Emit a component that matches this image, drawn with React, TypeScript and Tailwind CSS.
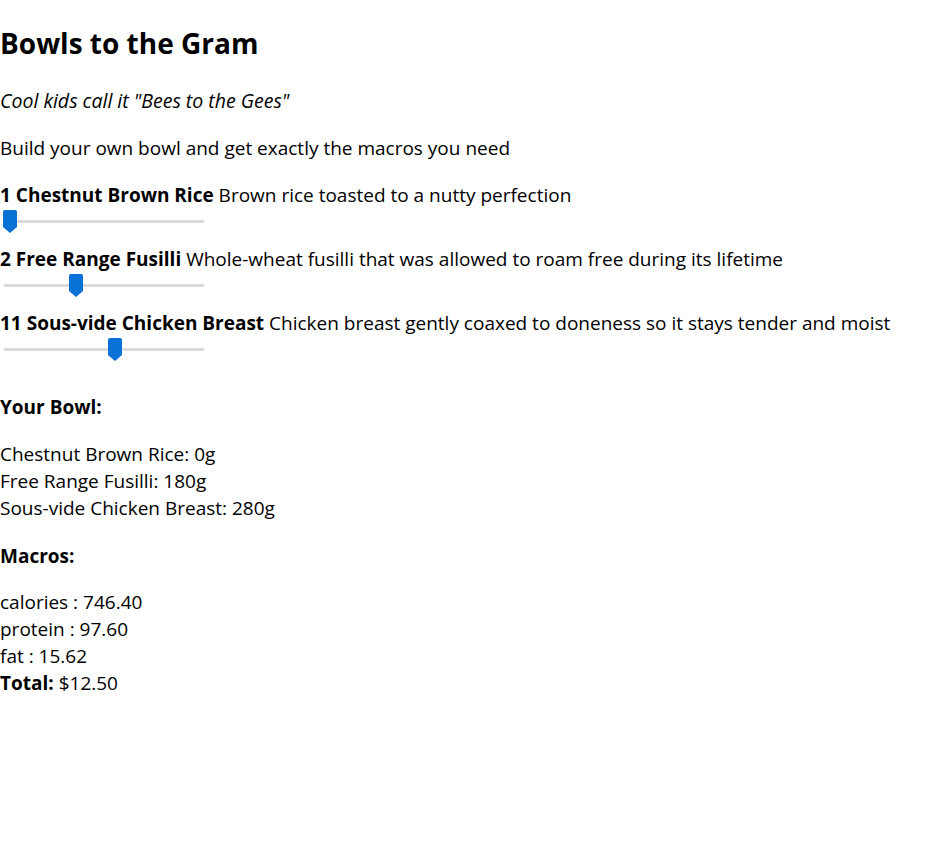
import React from "react";

const INGREDIENTS = [
  { qty: 1, name: "Chestnut Brown Rice", desc: "Brown rice toasted to a nutty perfection", grams: 0, pos: 0 },
  { qty: 2, name: "Free Range Fusilli", desc: "Whole-wheat fusilli that was allowed to roam free during its lifetime", grams: 180, pos: 0.353 },
  { qty: 11, name: "Sous-vide Chicken Breast", desc: "Chicken breast gently coaxed to doneness so it stays tender and moist", grams: 280, pos: 0.556 },
];

const MACROS = [
  ["calories", "746.40"],
  ["protein", "97.60"],
  ["fat", "15.62"],
];

function Slider({ pos }: { pos: number }) {
  // thumb travels between x=3 and x=191 inside the 200px track box
  const left = 3 + pos * 188;
  return (
    <div className="relative h-[27px] w-[204px]">
      <div className="absolute left-[4px] top-[11px] h-[3px] w-[200px] bg-[#dcdcdc]" />
      <svg
        className="absolute top-[1px]"
        style={{ left }}
        width="14"
        height="23"
        viewBox="0 0 14 23"
      >
        <path d="M2 0 H12 Q14 0 14 2 V17 L7 23 L0 17 V2 Q0 0 2 0 Z" fill="#0a72d6" />
      </svg>
    </div>
  );
}

export default function App() {
  return (
    <main className="bg-white text-black text-[19px] leading-[27px] font-['Open_Sans',sans-serif]">
      <h1 className="pt-[22px] text-[28px] leading-[42px] font-bold">Bowls to the Gram</h1>

      <p className="mt-[23px] italic text-[19.5px]">Cool kids call it "Bees to the Gees"</p>
      <p className="mt-[21px]">Build your own bowl and get exactly the macros you need</p>

      <div className="mt-[20px] flex flex-col gap-[10px]">
        {INGREDIENTS.map((item) => (
          <div key={item.name}>
            <div>
              <b>
                {item.qty} {item.name}
              </b>{" "}
              {item.desc}
            </div>
            <Slider pos={item.pos} />
          </div>
        ))}
      </div>

      <h4 className="mt-[30px] font-bold">Your Bowl:</h4>
      <div className="mt-[20px]">
        {INGREDIENTS.map((item) => (
          <div key={item.name}>
            {item.name}: {item.grams}g
          </div>
        ))}
      </div>

      <h4 className="mt-[21px] font-bold">Macros:</h4>
      <div className="mt-[19px]">
        {MACROS.map(([k, v]) => (
          <div key={k}>
            {k} : {v}
          </div>
        ))}
        <div>
          <b>Total:</b> $12.50
        </div>
      </div>
    </main>
  );
}
